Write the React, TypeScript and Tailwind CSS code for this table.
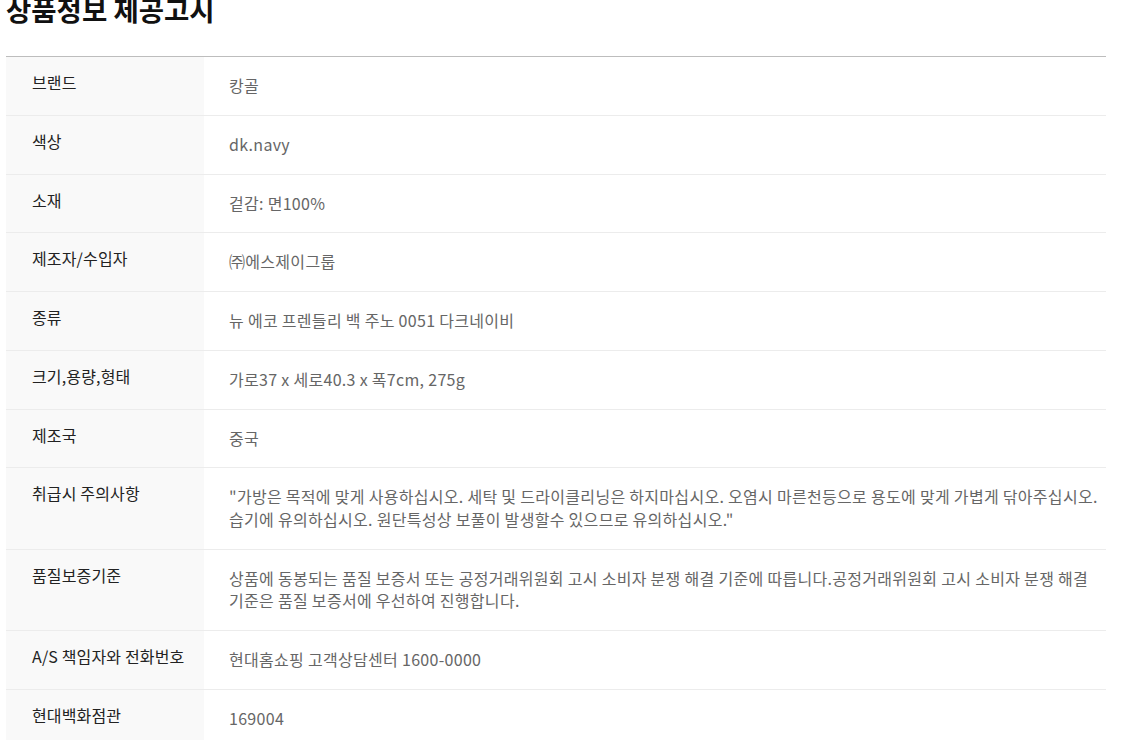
import React from "react";

const rows: [string, string][] = [
  ["브랜드", "캉골"],
  ["색상", "dk.navy"],
  ["소재", "겉감: 면100%"],
  ["제조자/수입자", "㈜에스제이그룹"],
  ["종류", "뉴 에코 프렌들리 백 주노 0051 다크네이비"],
  ["크기,용량,형태", "가로37 x 세로40.3 x 폭7cm, 275g"],
  ["제조국", "중국"],
  [
    "취급시 주의사항",
    "\"가방은 목적에 맞게 사용하십시오. 세탁 및 드라이클리닝은 하지마십시오. 오염시 마른천등으로 용도에 맞게 가볍게 닦아주십시오. 습기에 유의하십시오. 원단특성상 보풀이 발생할수 있으므로 유의하십시오.\"",
  ],
  [
    "품질보증기준",
    "상품에 동봉되는 품질 보증서 또는 공정거래위원회 고시 소비자 분쟁 해결 기준에 따릅니다.공정거래위원회 고시 소비자 분쟁 해결 기준은 품질 보증서에 우선하여 진행합니다.",
  ],
  ["A/S 책임자와 전화번호", "현대홈쇼핑 고객상담센터 1600-0000"],
  ["현대백화점관", "169004"],
];

export default function App() {
  return (
    <div
      className="w-[1143px] h-[740px] overflow-hidden bg-white"
      style={{ fontFamily: '"Noto Sans CJK KR", "Noto Sans", sans-serif' }}
    >
      <div className="pl-[6px] w-[1106px]">
        <h2 className="-mt-[9px] mb-[29px] text-[27.5px] leading-[36px] font-bold text-[#111]">
          상품정보 제공고시
        </h2>
        <div className="border-t border-[#bdbdbd]">
          {rows.map(([k, v]) => (
            <div key={k} className="flex border-b border-[#ececec]">
              <div className="w-[198px] shrink-0 bg-[#f9f9f9] pl-[26px] pt-[14px] text-[16px] leading-[22.6px] tracking-[0.15px] text-[#222] break-keep">
                {k}
              </div>
              <div className="flex-1 pl-[25px] pt-[17px] pb-[18.2px] text-[16px] leading-[22.6px] tracking-[0.3px] text-[#666] break-keep">
                {v}
              </div>
            </div>
          ))}
        </div>
      </div>
    </div>
  );
}
